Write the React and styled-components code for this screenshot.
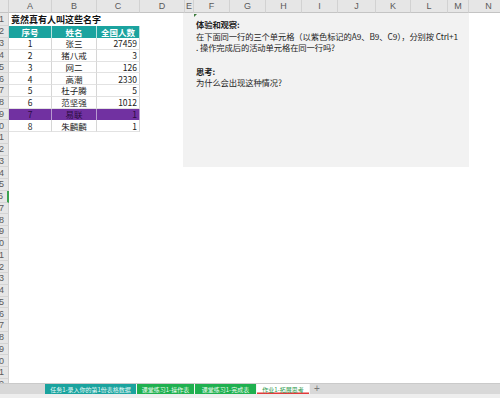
import React from "react";
import styled, { createGlobalStyle, css } from "styled-components";

const Global = createGlobalStyle`
  html, body { margin: 0; padding: 0; background: #fff; }
  body { font-family: "Noto Sans CJK SC", "Noto Sans", sans-serif; }
`;

const Screen = styled.div`
  width: 500px;
  height: 398px;
  display: flex;
  flex-direction: column;
  overflow: hidden;
  background: #fff;
`;

const COLS = [
  ["A", 43], ["B", 45], ["C", 43], ["D", 45], ["E", 9], ["F", 36], ["G", 36],
  ["H", 36], ["I", 36], ["J", 38], ["K", 35], ["L", 37], ["M", 21], ["N", 40],
];

const Sheet = styled.div`
  height: 383px;
  flex: none;
  overflow: hidden;
  display: grid;
  grid-template-columns: 9px ${COLS.map((c) => c[1] + "px").join(" ")};
  grid-template-rows: 13px 12.5px 12.5px repeat(30, 11.75px);
  font-size: 8.5px;
  color: #222;
`;

const Corner = styled.div`
  grid-row: 1;
  grid-column: 1;
  background: #e6e6e6;
  border-right: 1px solid #cfcfcf;
  border-bottom: 1px solid #c4c4c4;
  box-sizing: border-box;
`;

const ColHead = styled.div`
  grid-row: 1;
  background: #e6e6e6;
  border-right: 1px solid #d2d2d2;
  border-bottom: 1px solid #c4c4c4;
  box-sizing: border-box;
  display: flex;
  align-items: center;
  justify-content: center;
  font-family: "Liberation Sans", "Noto Sans", sans-serif;
  font-size: 9px;
  color: #5a5a5a;
  overflow: hidden;
`;

const RowHead = styled.div`
  grid-column: 1;
  background: #e6e6e6;
  border-bottom: 1px solid #d4d4d4;
  border-right: 1px solid ${(p) => (p.$active ? "#3aa24f" : "#cfcfcf")};
  ${(p) => p.$active && css`border-right-width: 2px; color: #2f8d47;`}
  box-sizing: border-box;
  display: flex;
  align-items: center;
  justify-content: flex-end;
  padding-right: 4px;
  font-family: "Liberation Sans", "Noto Sans", sans-serif;
  font-size: 9px;
  color: #5a5a5a;
  overflow: hidden;
  white-space: nowrap;
`;

const Title = styled.div`
  grid-row: 2;
  grid-column: 2 / 5;
  font-weight: bold;
  font-size: 9px;
  display: flex;
  align-items: center;
  padding-left: 2px;
  color: #111;
  white-space: nowrap;
`;

const variants = {
  head: css`
    background: #1ba39f;
    color: #fff;
    font-weight: bold;
    border-right: 1px solid #b9e2e0;
  `,
  purple: css`
    background: #7131a1;
    color: #2a0d40;
    border-right: 1px solid #b79ad0;
  `,
  plain: css`
    background: #fff;
    color: #222;
    border-right: 1px solid #d6d6d6;
    border-bottom: 1px solid #e2e2e2;
  `,
};

const Cell = styled.div`
  box-sizing: border-box;
  display: flex;
  align-items: center;
  justify-content: ${(p) => (p.$right ? "flex-end" : "center")};
  padding: 0 2px;
  white-space: nowrap;
  overflow: hidden;
  ${(p) => variants[p.$variant]}
`;

const Panel = styled.div`
  grid-column: 6 / 15;
  grid-row: 2 / 15;
  margin-left: -2px;
  background: #f2f2f2;
  padding: 6px 0 0 13px;
  line-height: 11.7px;
  font-size: 8.3px;
  letter-spacing: -0.1px;
  color: #1e1e1e;
  position: relative;
  z-index: 1;
`;

const PanelMark = styled.span`
  position: absolute;
  left: 11px;
  top: 1px;
  width: 0;
  height: 0;
  border-top: 3px solid #3b7a3b;
  border-right: 3px solid transparent;
`;

const Line = styled.div`
  height: 11.7px;
  white-space: nowrap;
  font-weight: ${(p) => (p.$bold ? "bold" : "normal")};
`;

const TabBar = styled.div`
  height: 10px;
  flex: none;
  display: flex;
  align-items: stretch;
  background: #d8d8d8;
  border-top: 1px solid #cacaca;
  box-sizing: content-box;
`;

const TabSpacer = styled.div`
  width: 45px;
  flex: none;
`;

const tabColors = {
  teal: css`background: #1aa39e; color: #e8fbf9;`,
  green: css`background: #1fb04f; color: #eafbef;`,
  active: css`
    background: #fff;
    color: #2c9a4c;
    box-shadow: inset 0 -1.5px 0 #e23a3a;
  `,
};

const Tab = styled.div`
  width: ${(p) => p.$w}px;
  flex: none;
  display: flex;
  align-items: center;
  justify-content: center;
  font-size: 6px;
  white-space: nowrap;
  border-right: 1px solid #f4f4f4;
  box-sizing: border-box;
  ${(p) => tabColors[p.$kind]}
`;

const AddTab = styled.div`
  width: 14px;
  display: flex;
  align-items: center;
  justify-content: center;
  color: #777;
  font-family: "Liberation Sans", sans-serif;
  font-size: 10px;
  line-height: 1;
`;

const BottomStrip = styled.div`
  flex: 1;
  background: #eeeeee;
`;

const rows = [
  ["1", "张三", "27459"],
  ["2", "猪八戒", "3"],
  ["3", "网二", "126"],
  ["4", "高潮", "2330"],
  ["5", "杜子腾", "5"],
  ["6", "范坚强", "1012"],
  ["7", "易联", "1"],
  ["8", "朱麟麟", "1"],
];

export default function App() {
  const rowCount = 32;
  return (
    <Screen>
      <Global />
      <Sheet>
        <Corner />
        {COLS.map(([l], i) => (
          <ColHead key={l} style={{ gridColumn: i + 2 }}>{l}</ColHead>
        ))}
        {Array.from({ length: rowCount }, (_, i) => (
          <RowHead key={i} style={{ gridRow: i + 2 }} $active={i + 1 === 16}>
            {i + 1}
          </RowHead>
        ))}
        <Title>竟然真有人叫这些名字</Title>
        {["序号", "姓名", "全国人数"].map((h, c) => (
          <Cell key={h} $variant="head" style={{ gridRow: 3, gridColumn: c + 2 }}>
            {h}
          </Cell>
        ))}
        {rows.map((r, ri) =>
          r.map((v, c) => (
            <Cell
              key={ri + "-" + c}
              $variant={ri === 6 ? "purple" : "plain"}
              $right={c === 2}
              style={{ gridRow: ri + 4, gridColumn: c + 2 }}
            >
              {v}
            </Cell>
          ))
        )}
        <Panel>
          <PanelMark />
          <Line $bold>体验和观察:</Line>
          <Line>在下面同一行的三个单元格（以紫色标记的A9、B9、C9），分别按 Ctrl+1</Line>
          <Line>. 操作完成后的活动单元格在同一行吗?</Line>
          <Line />
          <Line $bold>思考:</Line>
          <Line>为什么会出现这种情况?</Line>
        </Panel>
      </Sheet>
      <TabBar>
        <TabSpacer />
        <Tab $w={92} $kind="teal">任务1-录入你的第1份表格数据</Tab>
        <Tab $w={58} $kind="green">课堂练习1-操作表</Tab>
        <Tab $w={62} $kind="green">课堂练习1-完成表</Tab>
        <Tab $w={53} $kind="active">作业1-拓展思考</Tab>
        <AddTab>+</AddTab>
      </TabBar>
      <BottomStrip />
    </Screen>
  );
}
